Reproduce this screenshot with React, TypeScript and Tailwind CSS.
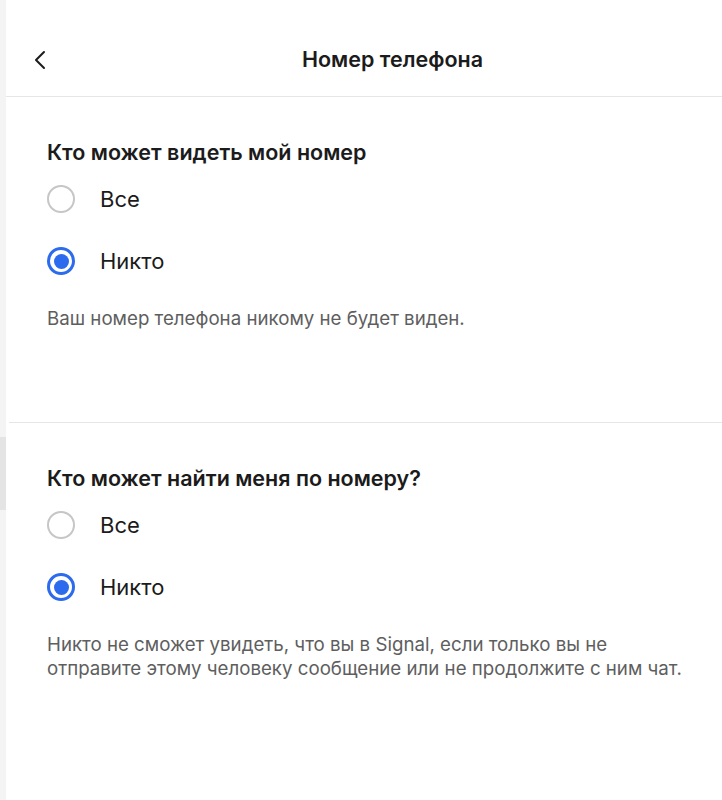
import type { ReactNode } from "react";

type Option = { label: string; checked?: boolean };

function Radio({ checked }: { checked?: boolean }) {
  if (checked) {
    return (
      <span className="flex h-[28px] w-[28px] items-center justify-center rounded-full border-[3px] border-[#2c6bed]">
        <span className="h-[15px] w-[15px] rounded-full bg-[#2c6bed]" />
      </span>
    );
  }
  return <span className="h-[28px] w-[28px] rounded-full border-2 border-[#c6c6c6]" />;
}

function Section({ title, options, children }: { title: string; options: Option[]; children: ReactNode }) {
  return (
    <section className="pr-[10px] pl-[41px]">
      <h2 className="text-[21.5px] font-semibold leading-[28px] text-[#1b1b1b]">{title}</h2>
      <div className="mt-[19px] flex flex-col gap-[34px]">
        {options.map((o) => (
          <label key={o.label} className="flex h-[28px] items-center gap-[25px]">
            <Radio checked={o.checked} />
            <span className="text-[22px] leading-[28px] text-[#1b1b1b]">{o.label}</span>
          </label>
        ))}
      </div>
      <p className="mt-[32px] max-w-[650px] text-[18.7px] leading-[24px] text-[#5e5e5e]">{children}</p>
    </section>
  );
}

export default function App() {
  return (
    <div className="flex min-h-[800px] w-[722px] bg-white" style={{ fontFamily: "Inter, 'Noto Sans', sans-serif" }}>
      <div className="flex w-[6px] flex-col bg-[#f4f4f4]">
        <div className="h-[437px]" />
        <div className="h-[73px] bg-[#e4e4e4]" />
      </div>
      <main className="flex-1">
        <header className="flex h-[97px] items-center border-b border-[#e6e6e6] pt-[23px] pl-[27px]">
          <button aria-label="Назад" className="text-[#1b1b1b]">
            <svg width="14" height="20" viewBox="0 0 14 20" fill="none">
              <path d="M11 2 3 10l8 8" stroke="currentColor" strokeWidth="2" strokeLinecap="round" strokeLinejoin="round" />
            </svg>
          </button>
          <h1 className="flex-1 pl-[16px] text-center text-[21.5px] font-semibold text-[#1b1b1b]">Номер телефона</h1>
        </header>
        <div className="pt-[41px]">
          <Section title="Кто может видеть мой номер" options={[{ label: "Все" }, { label: "Никто", checked: true }]}>
            Ваш номер телефона никому не будет виден.
          </Section>
        </div>
        <div className="mt-[91px] ml-[3px] border-t border-[#e6e6e6] pt-[41px]">
          <div className="-ml-[3px]">
            <Section title="Кто может найти меня по номеру?" options={[{ label: "Все" }, { label: "Никто", checked: true }]}>
              Никто не сможет увидеть, что вы в Signal, если только вы не отправите этому человеку сообщение или не продолжите с ним чат.
            </Section>
          </div>
        </div>
      </main>
    </div>
  );
}
